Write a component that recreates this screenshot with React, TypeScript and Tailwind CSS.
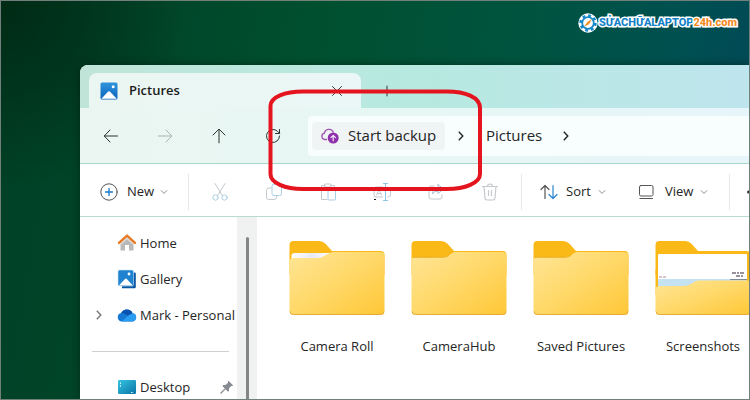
import { useState } from "react";
import type { ReactNode } from "react";
import clsx from "clsx";

type Folder = { name: string; content: "empty" | "sheet" | "preview" };

const FOLDERS: Folder[] = [
    { name: "Camera Roll", content: "sheet" },
    { name: "CameraHub", content: "empty" },
    { name: "Saved Pictures", content: "empty" },
    { name: "Screenshots", content: "preview" },
];

const Stroke = ({ children, className }: { children: ReactNode; className?: string }) => (
    <svg
        viewBox="0 0 20 20"
        fill="none"
        stroke="currentColor"
        strokeLinecap="round"
        strokeLinejoin="round"
        className={clsx("size-5 shrink-0", className)}
        aria-hidden="true"
    >
        {children}
    </svg>
);

const Chevron = () => (
    <svg viewBox="0 0 8 8" fill="none" stroke="#8a8f8e" strokeLinecap="round" className="size-2 shrink-0" aria-hidden="true">
        <path d="M1.2 2.6 4 5.4l2.8-2.8" />
    </svg>
);

const CrumbChevron = ({ className }: { className?: string }) => (
    <svg viewBox="0 0 8 12" fill="none" stroke="currentColor" strokeWidth="1.4" className={clsx("h-3 w-2 shrink-0", className)} aria-hidden="true">
        <path d="m1.8 1.8 4 4.2-4 4.2" />
    </svg>
);

const PictureIcon = () => (
    <svg viewBox="0 0 18 18" className="size-[18px] shrink-0" aria-hidden="true">
        <defs>
            <linearGradient id="pic" x1="0" y1="0" x2="0" y2="1">
                <stop offset="0" stopColor="#2f95dc" />
                <stop offset="1" stopColor="#0c63bb" />
            </linearGradient>
        </defs>
        <rect x="0.5" y="0.5" width="17" height="17" rx="1.5" fill="url(#pic)" />
        <path d="M1.3 16.7 8 9.8q1-.9 2 0l6.8 6.9z" fill="#fff" />
        <circle cx="13.2" cy="4.7" r="1.5" fill="#fff" />
    </svg>
);

const HomeIcon = () => (
    <svg viewBox="0 0 20 20" className="size-5" aria-hidden="true">
        <path d="M3.5 9 10 3l6.5 6v8.4H12V12H8v5.4H3.5z" fill="#b9b9b9" />
        <path d="M3.5 9 10 3l6.5 6v3L10 6.2 3.5 12z" fill="#dedede" />
        <path d="M2 9.9 10 2.6l8 7.3" fill="none" stroke="#e87b26" strokeWidth="2.4" strokeLinecap="round" strokeLinejoin="round" />
    </svg>
);

const GalleryIcon = () => (
    <svg viewBox="0 0 20 20" className="size-5" aria-hidden="true">
        <path d="M5 3.5h12.5q1.300 0 1.300 1.300V18q0 1.300-1.300 1.300H5z" fill="#0b57a4" />
        <rect x="1" y="1" width="15.5" height="16" rx="1.5" fill="#1f83d2" stroke="#cfe6f7" strokeWidth="0.6" />
        <path d="M1.8 16.500 8 9.900q.9-.9 1.800 0l6 6.600z" fill="#fff" />
        <circle cx="12" cy="5" r="1.4" fill="#fff" />
    </svg>
);

const OneDriveIcon = () => (
    <svg viewBox="0 0 20 20" className="size-5" aria-hidden="true">
        <path d="M4.800 16.500a4.300 4.300 0 0 1-.6-8.500A6.300 6.300 0 0 1 15.600 8.200 4.200 4.200 0 0 1 15.600 16.500z" fill="#1478d4" />
        <path d="M4.200 8A6.300 6.300 0 0 1 15.600 8.200L11 10.800 7 8.500z" fill="#0b52b0" />
        <path d="M4.800 16.500 11 10.800l4.600-2.600A4.200 4.200 0 0 1 15.600 16.500z" fill="#2a9df0" />
    </svg>
);

const DesktopIcon = () => (
    <svg viewBox="0 0 20 20" className="size-5" aria-hidden="true">
        <defs>
            <linearGradient id="desk" x1="0" y1="0" x2="1" y2="1">
                <stop offset="0" stopColor="#35c6e0" />
                <stop offset="1" stopColor="#0a72a8" />
            </linearGradient>
        </defs>
        <rect x="1" y="3" width="18" height="14" rx="1.3" fill="url(#desk)" />
        <path d="M3.5 5.500v4.500M14 15.500h3" stroke="#d8f7ff" strokeDasharray="1.5 1.3" />
    </svg>
);

const PinIcon = () => (
    <svg viewBox="0 0 14 14" className="mr-[3px] ml-auto size-[14px]" aria-hidden="true">
        <path d="M8.500.8 13.200 5.500l-1.200.6-.8-.1-2.300 2.500.1 2.300-1 .9L2.400 6l.9-1 2.300.1L8 2.800l-.1-.9z" fill="#848a90" />
        <path d="M4.900 9.100 1 13" stroke="#848a90" strokeWidth="1.3" strokeLinecap="round" />
    </svg>
);

const CloudUpIcon = () => (
    <svg viewBox="0 0 20 18" className="h-[18px] w-5 shrink-0" fill="none" aria-hidden="true">
        <path
            d="M6.500 12.500H4.700A3.200 3.200 0 0 1 4.400 6.200 4.700 4.700 0 0 1 13.300 5.100"
            stroke="#9a55ae"
            strokeWidth="1.3"
            strokeLinecap="round"
        />
        <circle cx="13.2" cy="11" r="5.5" fill="#8e30aa" />
        <path d="M13.200 13.800V8.600M10.900 10.700l2.300-2.300 2.300 2.300" stroke="#f6e6fb" strokeWidth="1.2" strokeLinecap="round" strokeLinejoin="round" />
    </svg>
);

const FolderIcon = ({ content }: { content: Folder["content"] }) => (
    <svg viewBox="0 0 96 76" className="h-[76px] w-24" aria-hidden="true">
        <defs>
            <linearGradient id="front" x1="0" y1="0" x2="1" y2="1">
                <stop offset="0" stopColor="#ffe596" />
                <stop offset="0.5" stopColor="#ffd868" />
                <stop offset="1" stopColor="#ffc736" />
            </linearGradient>
            <linearGradient id="sheet" x1="0" y1="0" x2="1" y2="0">
                <stop offset="0" stopColor="#fff" />
                <stop offset="0.5" stopColor="#e9e9f4" />
                <stop offset="1" stopColor="#fff" />
            </linearGradient>
        </defs>
        <path d="M.5 5q0-4 4-4H30q4 0 6.500 2.800L43 11h48.500q4 0 4 4v20H.5z" fill="#fbb917" />
        {content === "empty" && (
            <>
                <path d="M.5 21q0-4 4-4H32q3.500 0 6-1.800L43 12h48q4.500 0 4.500 4v55q0 4-4 4h-87q-4 0-4-4z" fill="url(#front)" />
                <path d="M2 17.300h30q3.500 0 6-1.800" fill="none" stroke="#e5a615" strokeWidth="0.8" />
            </>
        )}
        {content === "sheet" && (
            <>
                <path d="M2.500 16q0-3 3-3H43v6H2.500z" fill="url(#sheet)" />
                <path d="M.5 22q0-4 4-4H28q4.500 0 8-2.500L43 12h48q4.500 0 4.500 4v55q0 4-4 4h-87q-4 0-4-4z" fill="url(#front)" />
            </>
        )}
        {content === "preview" && (
            <>
                <path d="M.5 30h95v25H.5z" fill="#fbb917" />
                <rect x="3" y="14" width="89" height="34" rx="1" fill="#fff" />
                <path d="M3 39h89v10H3z" fill="#c5e2f3" />
                <path d="M4 37h8" stroke="#b08a9c" strokeDasharray="3 1" />
                <path d="M77 33h13M81 36h7" stroke="#777079" strokeWidth="1.3" strokeDasharray="4 1 2 1" />
                <path d="M75 39.500h17" stroke="#7c8a99" />
                <path d="M.5 50q0-4 4-4H28q5 0 8-2l4-2.500q2-1 4-1h47.500q4 0 4 4V71q0 4-4 4h-87q-4 0-4-4z" fill="url(#front)" />
            </>
        )}
        <path d="M1 71.500q.5 3 3.500 3h87q3 0 3.500-3" fill="none" stroke="#e6aa3a" />
    </svg>
);

const BrandLogo = () => (
    <a href="#" className="flex items-center gap-px">
        <svg viewBox="0 0 20 20" className="size-5" aria-hidden="true">
            <circle cx="10" cy="10" r="7.2" fill="#fff" stroke="#fff" strokeWidth="5" />
            <circle cx="10" cy="10" r="7.4" fill="none" stroke="#1686ca" strokeWidth="2.6" strokeDasharray="2.8 3.011" />
            <circle cx="10" cy="10" r="5.8" fill="#fff" stroke="#1686ca" strokeWidth="1.8" />
            <path d="m13.800 6.200-2.600 4.700-1.900-1.900z" fill="#f28a1d" />
            <path d="m6.200 13.800 3.100-4.800 1.900 1.900z" fill="#f28a1d" />
        </svg>
        <span className="font-[Roboto,'Liberation_Sans',sans-serif] text-[11px] leading-5 font-extrabold text-[#1180c8] [paint-order:stroke] [-webkit-text-stroke:3px_white]">
            SỬACHỮALAPTOP<span className="text-[#f58a1f]">24h.com</span>
        </span>
    </a>
);

const NavButton = ({ label, disabled, children }: { label: string; disabled?: boolean; children: ReactNode }) => (
    <button type="button" aria-label={label} disabled={disabled} className="flex w-[54px] justify-center text-[#2a3331] disabled:text-[#a9b5b1]">
        <Stroke>{children}</Stroke>
    </button>
);

const ToolButton = ({ label, children }: { label: string; children: ReactNode }) => (
    <button type="button" aria-label={label} className="flex w-[54px] justify-center text-[#c3c9cc]">
        <Stroke>{children}</Stroke>
    </button>
);

const Divider = () => <div className="h-9 w-px shrink-0 bg-[#e6e8e8]" />;

const SideItem = ({ label, icon, expandable, pinned }: { label: string; icon: ReactNode; expandable?: boolean; pinned?: boolean }) => (
    <button type="button" className="flex h-9 w-full items-center text-left">
        <span className="flex w-[37px] justify-center text-[#777]">{expandable && <CrumbChevron />}</span>
        {icon}
        <span className="ml-[3px] whitespace-nowrap">{label}</span>
        {pinned && <PinIcon />}
    </button>
);

export default function App() {
    const [selected, setSelected] = useState<string | null>(null);

    return (
        <div className="relative flex h-screen min-h-[400px] flex-col overflow-hidden border border-[#71807a] bg-[radial-gradient(circle_at_0_0,#002a14_0%,transparent_22%),linear-gradient(100deg,#004026_0%,#004529_18%,#005030_40%,#00543f_65%,#005052_85%,#004458_100%)] font-['Open_Sans','Noto_Sans',sans-serif] text-sm text-[#252525]">
            <header className="flex h-16 shrink-0 items-start justify-end pt-3 pr-3">
                <BrandLogo />
            </header>

            <main className="ml-[79px] flex flex-1 flex-col overflow-hidden rounded-tl-lg bg-white shadow-[0_0_8px_rgba(0,20,10,0.5)]">
                {/* Tab strip */}
                <div className="flex h-[43px] shrink-0 bg-linear-to-r from-[#c0e5d8] via-[#b7e9e0] to-[#bee5ed]">
                    <div className="flex w-[281px] shrink-0 pt-2">
                        <div className="w-[9px]" />
                        <div className="flex flex-1 items-center rounded-t-lg bg-linear-to-r from-[#ebf6f2] to-[#eaf7f6] pl-[11px]">
                            <PictureIcon />
                            <span className="ml-[11px] text-[13px] font-semibold text-[#1c1c1c]">Pictures</span>
                            <button type="button" aria-label="Close tab" className="mr-[15px] ml-auto">
                                <Stroke className="size-[18px]"><path d="m5 5 10 10M15 5 5 15" /></Stroke>
                            </button>
                        </div>
                    </div>
                    <div className="flex flex-1 items-center pt-2 pl-[17px]">
                        <button type="button" aria-label="New tab">
                            <Stroke className="size-[18px]"><path d="M10 4.500v11" /><path d="M5 10h10" stroke="#8cc5ba" /></Stroke>
                        </button>
                    </div>
                </div>

                {/* Navigation */}
                <nav className="flex h-14 shrink-0 items-center border-b border-[#a9d5ca] bg-linear-to-r from-[#ebf6f2] via-[#e6f7f4] to-[#e6f5fa] pt-px pl-1">
                    <NavButton label="Back"><path d="M16.500 10H3.500M9 4 3.200 10 9 16" /></NavButton>
                    <NavButton label="Forward" disabled><path d="M3.500 10h13M11 4l5.800 6-5.800 6" /></NavButton>
                    <NavButton label="Up"><path d="M10 16.800V3.500M4 9l6-5.900L16 9" /></NavButton>
                    <NavButton label="Refresh"><path d="M16.500 10a6.500 6.500 0 1 1-2-4.700l2 2M16.500 3.500v4h-4" /></NavButton>
                    <div className="ml-2 flex h-10 flex-1 items-center rounded-l bg-[#f8fdfd] pl-1 text-[15px]">
                        <button type="button" className="flex h-7 w-[133px] items-center gap-2 rounded-sm bg-[#f1f4f4] pl-2 whitespace-nowrap">
                            <CloudUpIcon />
                            Start backup
                        </button>
                        <CrumbChevron className="ml-3" />
                        <button type="button" className="ml-[21px]">Pictures</button>
                        <CrumbChevron className="ml-5" />
                    </div>
                </nav>

                {/* Command bar */}
                <div role="toolbar" className="flex h-[53px] shrink-0 items-center border-b border-[#b9dad3] pt-[3px] text-[13px]">
                    <button type="button" className="flex w-[108px] shrink-0 items-center pl-[19px]">
                        <Stroke className="text-[#555]"><circle cx="10" cy="10" r="8.2" /><path d="M10 6.500v7M6.500 10h7" stroke="#1878c8" strokeWidth="1.3" /></Stroke>
                        <span className="mr-[6px] ml-2">New</span>
                        <Chevron />
                    </button>
                    <Divider />
                    <div className="ml-1 flex">
                        <ToolButton label="Cut">
                            <path d="m5 1.500 7.300 12M15 1.500l-7.300 12" />
                            <circle cx="5.5" cy="15.5" r="2.7" stroke="#a9cfe4" />
                            <circle cx="14.5" cy="15.5" r="2.7" stroke="#a9cfe4" />
                        </ToolButton>
                        <ToolButton label="Copy">
                            <rect x="8" y="2" width="9.5" height="11.5" rx="2" stroke="#a9cfe4" />
                            <path d="M7.500 6H5Q2.500 6 2.500 8.500V15q0 2.500 2.500 2.500h5q2.500 0 2.500-2.500v-1" />
                        </ToolButton>
                        <ToolButton label="Paste">
                            <path d="M9 17.500H3.500v-14H7M13 3.500h3.500V7M7 2h6v3H7z" />
                            <rect x="10" y="8" width="7.5" height="10" rx="1" stroke="#a9cfe4" />
                        </ToolButton>
                        <ToolButton label="Rename">
                            <path d="M10.500 5H4Q2 5 2 7v6q0 2 2 2h6.500M16 5q2.500 0 2.500 2v6q0 2-2.500 2M4.500 13 7 7.500 9.500 13M5.500 11.500h3" />
                            <path d="M11.500 1.500h4M11.500 18.500h4M13.500 1.500v17" stroke="#8fc3e4" />
                        </ToolButton>
                        <ToolButton label="Share">
                            <path d="M8 4H5Q3 4 3 6v9q0 2 2 2h9q2 0 2-2v-2" />
                            <path d="M12 2.500 17.500 7 12 11.500V9q-4 0-5.500 3Q7 6 12 5z" stroke="#a9bfd0" />
                        </ToolButton>
                        <ToolButton label="Delete">
                            <path d="M2.500 4.500h15M7.500 4.500q0-2.500 2.500-2.500t2.500 2.500M4 4.500l1 11.500q.2 2 2 2h6q1.800 0 2-2l1-11.500M8.500 8.500v5M11.500 8.500v5" strokeWidth="1.2" />
                        </ToolButton>
                    </div>
                    <div className="ml-1"><Divider /></div>
                    <button type="button" className="ml-[17px] flex w-[97px] shrink-0 items-center">
                        <Stroke className="text-[#555]"><path d="M6 16.500v-13M2 7.500l4-4 4 4" strokeWidth="1.2" /><path d="M14 3.500v13M10 12.500l4 4 4-4" stroke="#2683d1" strokeWidth="1.2" /></Stroke>
                        <span className="mr-[7px] ml-[7px]">Sort</span>
                        <Chevron />
                    </button>
                    <button type="button" className="flex w-[93px] shrink-0 items-center">
                        <Stroke className="text-[#555]"><rect x="3.5" y="3.5" width="13.5" height="10.5" rx="1.5" /><path d="M4 16.500h12.500" strokeWidth="1.2" /></Stroke>
                        <span className="mr-[7px] ml-[9px]">View</span>
                        <Chevron />
                    </button>
                    <Divider />
                    <button type="button" aria-label="See more" className="ml-4 text-[#333]">
                        <svg viewBox="0 0 20 20" className="size-5" fill="currentColor" aria-hidden="true">
                            <circle cx="2.5" cy="10" r="1.5" /><circle cx="9" cy="10" r="1.5" /><circle cx="15.5" cy="10" r="1.5" />
                        </svg>
                    </button>
                </div>

                <div className="flex min-h-0 flex-1">
                    {/* Sidebar */}
                    <aside className="w-[157px] shrink-0 overflow-hidden pt-2 text-[13px]">
                        <SideItem label="Home" icon={<HomeIcon />} />
                        <SideItem label="Gallery" icon={<GalleryIcon />} />
                        <SideItem label="Mark - Personal" icon={<OneDriveIcon />} expandable />
                        <div className="flex h-9 items-center pr-2 pl-3"><hr className="flex-1 border-[#cfcfcf]" /></div>
                        <SideItem label="Desktop" icon={<DesktopIcon />} pinned />
                    </aside>
                    <div className="flex w-5 shrink-0 justify-center bg-[#f0f1f1] pt-5">
                        <div className="w-[3px] rounded-t bg-[#858585]" />
                    </div>

                    {/* Folder grid */}
                    <section className="flex flex-1 overflow-hidden pt-[23px] pl-[19px]">
                        {FOLDERS.map((folder) => (
                            <button
                                key={folder.name}
                                type="button"
                                aria-pressed={selected === folder.name}
                                onClick={() => setSelected(folder.name)}
                                className="flex w-[122px] shrink-0 flex-col items-center self-start text-[13px]"
                            >
                                <FolderIcon content={folder.content} />
                                <span className="mt-5 leading-5">{folder.name}</span>
                            </button>
                        ))}
                    </section>
                </div>
            </main>

            {/* Highlight around the backup button */}
            <svg viewBox="0 0 216 114" fill="none" className="pointer-events-none absolute top-[87px] left-[266px] h-[114px] w-[216px]" aria-hidden="true">
                <path
                    d="M3.500 18C3.500 9 18 3.500 36 3.500H180C198 3.500 213 9 213 20V86C213 95 198 101 180 101H36C18 101 3.500 95 3.500 86Z"
                    stroke="#e5151f"
                    strokeWidth="4"
                />
                <path d="M107 111h2v1h-2z" fill="#111" />
            </svg>
        </div>
    );
}
